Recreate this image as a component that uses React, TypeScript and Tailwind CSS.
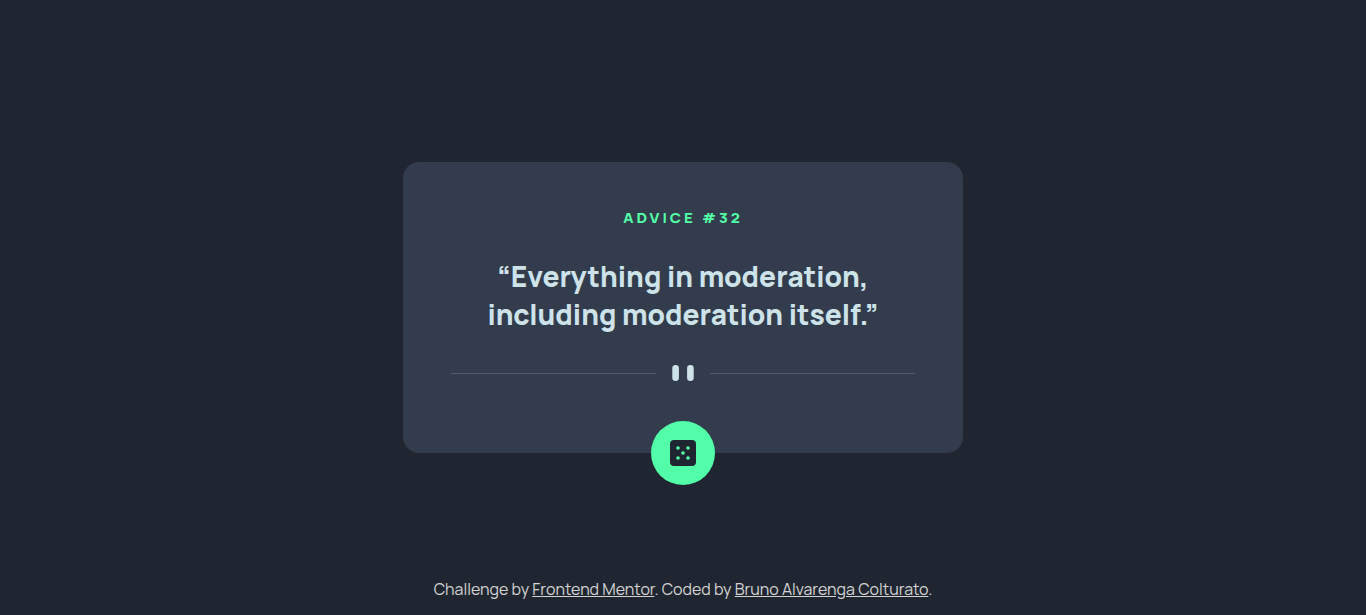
export default function App() {
  return (
    <div className="flex min-h-screen flex-col bg-[#1f2632] font-['Manrope','Inter',sans-serif]">
      <main className="flex flex-1 items-center justify-center px-4 pt-9">
        <section className="flex w-full max-w-[560px] flex-col items-center rounded-2xl bg-[#323c4c] px-12 pt-12">
          <h1 className="text-[15px] leading-4 font-extrabold tracking-[3px] text-[#52ffa8]">ADVICE #32</h1>
          <p className="mt-[31px] text-center text-[28px] leading-[38px] font-extrabold text-[#cee3e9]">
            “Everything in moderation,
            <br />
            including moderation itself.”
          </p>
          <div className="mt-8 flex w-full items-center gap-4" aria-hidden="true">
            <span className="h-px flex-1 bg-[#4f5d74]" />
            <svg width="22" height="16" viewBox="0 0 22 16" fill="#cee3e9">
              <rect x="0.3" width="6.6" height="16" rx="3.3" />
              <rect x="15.1" width="6.6" height="16" rx="3.3" />
            </svg>
            <span className="h-px flex-1 bg-[#4f5d74]" />
          </div>
          <button aria-label="New advice" className="mt-10 -mb-8 flex size-16 items-center justify-center rounded-full bg-[#52ffa8]">
            <svg width="26" height="26" viewBox="0 0 26 26">
              <rect width="26" height="26" rx="4" fill="#1f2632" />
              <g fill="#52ffa8">
                <circle cx="8" cy="8" r="1.8" />
                <circle cx="18" cy="8" r="1.8" />
                <circle cx="13" cy="13" r="1.8" />
                <circle cx="8" cy="18" r="1.8" />
                <circle cx="18" cy="18" r="1.8" />
              </g>
            </svg>
          </button>
        </section>
      </main>
      <footer className="pb-4 text-center text-base leading-5 text-[#d3d3d3]">
        Challenge by <a href="#" className="underline">Frontend Mentor</a>. Coded by{" "}
        <a href="#" className="underline">Bruno Alvarenga Colturato</a>.
      </footer>
    </div>
  );
}
